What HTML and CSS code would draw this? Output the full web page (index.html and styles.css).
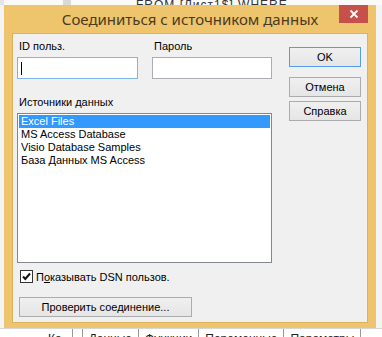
FILE: index.html
```html
<!DOCTYPE html>
<html lang="ru">
<head>
    <meta charset="UTF-8">
    <title>Соединиться с источником данных</title>
    <link rel="stylesheet" href="styles.css">
</head>
<body>
    <div class="top-strip">
        <span class="bg-cell"></span>
        <span class="bg-sql">FROM [Лист1$] WHERE</span>
    </div>
    <div class="dialog">
        <div class="titlebar">
            <span class="title">Соединиться с источником данных</span>
            <button class="close" aria-label="Закрыть">
                <svg width="10" height="10" viewBox="0 0 10 10"><path d="M1.5 1.5 L8.5 8.5 M8.5 1.5 L1.5 8.5" stroke="#fff" stroke-width="1.8"/></svg>
            </button>
        </div>
        <div class="content">
            <div class="main">
                <div class="fields">
                    <div class="field">
                        <label for="uid">ID польз.</label>
                        <div class="input focused" id="uid"><span class="caret"></span></div>
                    </div>
                    <div class="field">
                        <label for="pwd">Пароль</label>
                        <div class="input pwd" id="pwd"></div>
                    </div>
                </div>
                <div class="list-label">Источники данных</div>
                <ul class="list">
                    <li class="selected">Excel Files</li>
                    <li>MS Access Database</li>
                    <li>Visio Database Samples</li>
                    <li>База Данных MS Access</li>
                </ul>
                <div class="check">
                    <span class="box">
                        <svg width="11" height="11" viewBox="0 0 11 11"><path d="M2 5.5 L4.3 8 L9 2.5" fill="none" stroke="#111" stroke-width="2"/></svg>
                    </span>
                    <span>П<u>о</u>казывать DSN пользов.</span>
                </div>
                <button class="btn test">Проверить соединение...</button>
            </div>
            <div class="side">
                <button class="btn default">OK</button>
                <button class="btn cancel">Отмена</button>
                <button class="btn">Справка</button>
            </div>
        </div>
    </div>
    <div class="tabs">
        <span class="tab first">Ка</span>
        <span class="tab gap"></span>
        <span class="tab">Данные</span>
        <span class="tab">Функции</span>
        <span class="tab">Переменные</span>
        <span class="tab">Параметры</span>
    </div>
</body>
</html>
```

FILE: styles.css
```css
body {
    margin: 0;
    width: 382px;
    height: 337px;
    overflow: hidden;
    background: #f4f4f4;
    font-family: 'Liberation Sans', Arial, sans-serif;
    font-size: 11px;
    color: #000;
}
.top-strip {
    height: 5px;
    overflow: hidden;
    display: flex;
    align-items: flex-end;
    background: #fafafa;
    border-left: 4px solid #e4e4e4;
}
.bg-cell {
    width: 8px;
    height: 5px;
    margin-left: 59px;
    background: #d9d9d9;
}
.bg-sql {
    margin-left: 65px;
    font-size: 12px;
    line-height: 12px;
    margin-bottom: -6px;
    color: #333;
    letter-spacing: 1px;
}
.dialog {
    width: 372px;
    height: 323px;
    margin-left: 4px;
    box-sizing: border-box;
    padding: 0 8px 5px 8px;
    background: #eec46d;
    display: flex;
    flex-direction: column;
}
.titlebar {
    height: 28px;
    display: flex;
    align-items: flex-start;
    margin: 0 -8px;
}
.title {
    flex: 1;
    text-align: center;
    padding-left: 37px;
    font-family: 'Noto Sans', sans-serif;
    font-size: 15px;
    line-height: 29px;
    color: #4a3b1f;
}
.close {
    width: 29px;
    height: 18px;
    margin-right: 8px;
    border: none;
    padding: 0;
    background: #c7504a;
    display: flex;
    align-items: center;
    justify-content: center;
}
.content {
    flex: 1;
    background: #f0f0f0;
    border: 1px solid #dcb35c;
    box-sizing: border-box;
    display: flex;
    padding: 5px 6px 0 4px;
    gap: 16px;
}
.main {
    width: 256px;
    display: flex;
    flex-direction: column;
}
.fields {
    display: flex;
    gap: 14px;
}
.field {
    display: flex;
    flex-direction: column;
}
.field label {
    line-height: 14px;
    padding-left: 2px;
    margin-bottom: 4px;
}
.input {
    width: 121px;
    height: 22px;
    box-sizing: border-box;
    border: 1px solid #abadb3;
    background: #fff;
    display: flex;
    align-items: center;
    padding-left: 3px;
}
.input.pwd {
    width: 120px;
}
.input.focused {
    border-color: #7eb4ea;
}
.caret {
    width: 1px;
    height: 13px;
    background: #000;
}
.list-label {
    margin-top: 16px;
    line-height: 14px;
    padding-left: 2px;
    margin-bottom: 4px;
}
.list {
    list-style: none;
    margin: 0;
    padding: 1px;
    width: 255px;
    height: 150px;
    box-sizing: border-box;
    border: 1px solid #828790;
    background: #fff;
}
.list li {
    line-height: 13px;
    padding-left: 2px;
}
.list li.selected {
    background: #3399ff;
    color: #fff;
}
.check {
    display: flex;
    align-items: center;
    gap: 3px;
    margin-top: 7px;
    margin-left: 3px;
    height: 13px;
}
.box {
    width: 13px;
    height: 13px;
    box-sizing: border-box;
    border: 1px solid #333;
    background: #fff;
    display: flex;
    align-items: center;
    justify-content: center;
}
.btn {
    height: 20px;
    box-sizing: border-box;
    border: 1px solid #acacac;
    background: linear-gradient(#f0f0f0, #e5e5e5);
    font-family: 'Liberation Sans', Arial, sans-serif;
    font-size: 11px;
    color: #000;
    padding: 0;
}
.btn.test {
    width: 173px;
    margin-top: 14px;
    margin-left: 2px;
}
.side {
    width: 72px;
    display: flex;
    flex-direction: column;
    padding-top: 8px;
    gap: 4px;
}
.side .btn {
    width: 72px;
}
.btn.default {
    border-color: #569de5;
}
.btn.cancel {
    margin-top: 6px;
}
.tabs {
    height: 9px;
    overflow: hidden;
    display: flex;
    align-items: flex-start;
    background: #fff;
    border-top: 1px solid #d6d6d6;
    padding-left: 40px;
}
.tab {
    font-size: 12px;
    line-height: 14px;
    padding: 3px 6px 0 6px;
    border-right: 1px solid #9a9a9a;
    color: #222;
}
.tab.first {
    padding-left: 8px;
    padding-right: 10px;
}
.tab.gap {
    width: 9px;
    padding: 0;
    height: 9px;
}
```
